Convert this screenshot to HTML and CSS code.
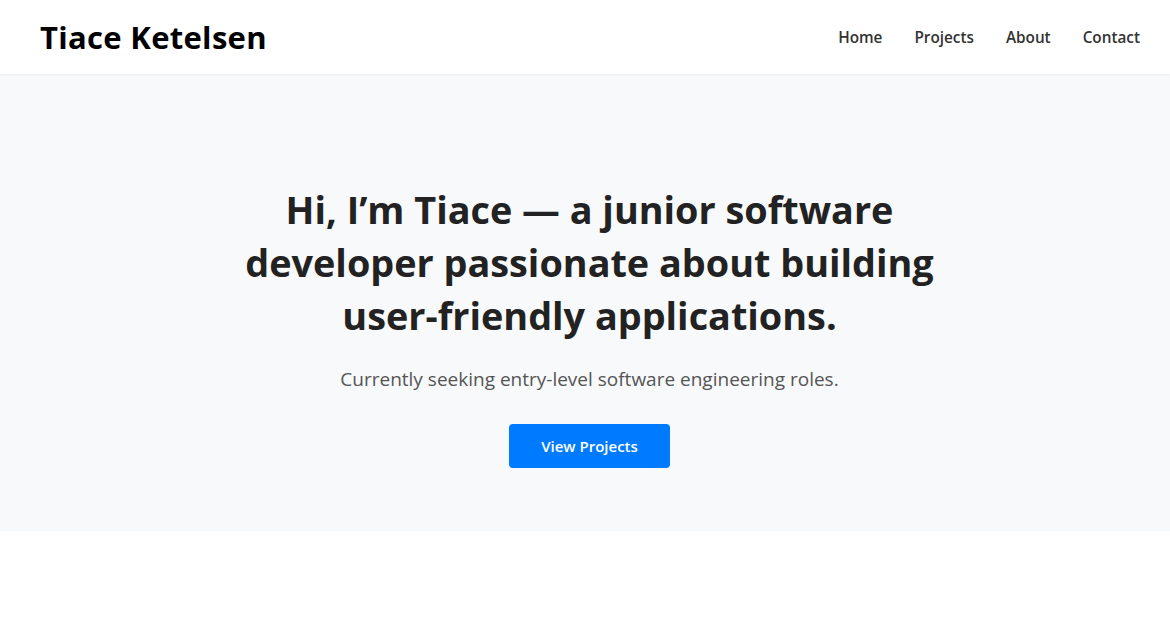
FILE: index.html
```html
<!DOCTYPE html>
<html lang="en">
<head>
<meta charset="utf-8">
<title>Tiace Ketelsen</title>
<link rel="stylesheet" href="styles.css">
</head>
<body>
<header class="site-header">
  <div class="logo">Tiace Ketelsen</div>
  <nav class="nav">
    <a href="#">Home</a>
    <a href="#">Projects</a>
    <a href="#">About</a>
    <a href="#">Contact</a>
  </nav>
</header>
<section class="hero">
  <h1 class="hero-title">Hi, I’m Tiace — a junior software developer passionate about building user-friendly applications.</h1>
  <p class="hero-sub">Currently seeking entry-level software engineering roles.</p>
  <a class="btn" href="#">View Projects</a>
</section>
</body>
</html>
```
FILE: styles.css
```css
* { box-sizing: border-box; }
html, body { margin: 0; padding: 0; }
body {
  font-family: "Open Sans", "Noto Sans", sans-serif;
  background: #fff;
  color: #222;
}
.site-header {
  height: 74px;
  display: flex;
  align-items: center;
  justify-content: space-between;
  padding: 0 30px 0 40px;
  background: #fff;
  box-shadow: 0 1px 3px rgba(0,0,0,0.06);
  position: relative;
}
.logo {
  font-size: 31px;
  font-weight: 700;
  color: #000;
  letter-spacing: 0.3px;
}
.nav {
  display: flex;
  gap: 32px;
  padding-bottom: 1px;
}
.nav a {
  font-size: 15.3px;
  font-weight: 600;
  color: #333;
  text-decoration: none;
}
.hero {
  background: #f8f9fa;
  height: 457px;
  display: flex;
  flex-direction: column;
  align-items: center;
  padding: 109px 0 0 9px;
  text-align: center;
}
.hero-title {
  margin: 0;
  max-width: 720px;
  font-size: 37.8px;
  line-height: 53px;
  font-weight: 700;
  color: #222;
}
.hero-sub {
  margin: 24px 0 0;
  font-size: 19px;
  color: #555;
}
.btn {
  margin-top: 32px;
  width: 161px;
  height: 44px;
  display: flex;
  align-items: center;
  justify-content: center;
  background: #007bff;
  color: #fff;
  border-radius: 4px;
  font-size: 15px;
  font-weight: 600;
  text-decoration: none;
}
```
